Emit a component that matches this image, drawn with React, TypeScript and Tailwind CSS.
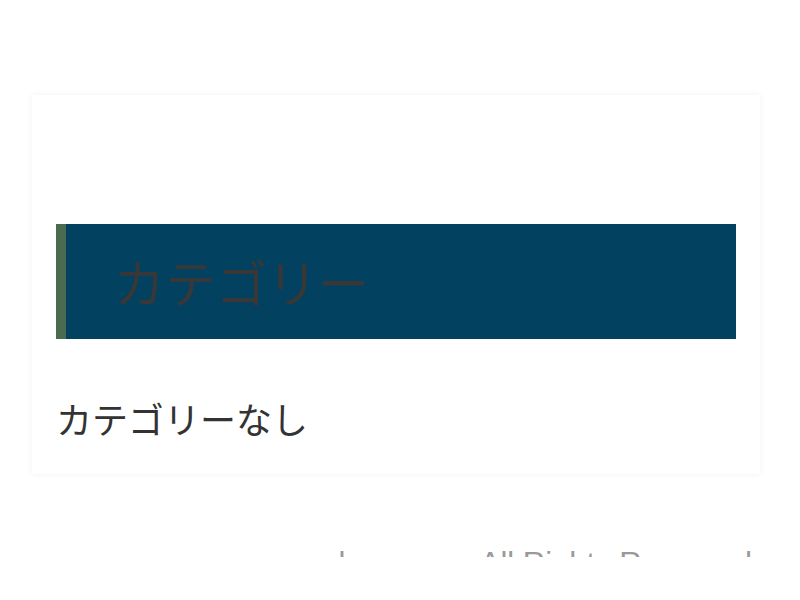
export default function App() {
  return (
    <div
      className="min-h-screen bg-white"
      style={{ fontFamily: '"Noto Sans CJK JP", "Noto Sans", sans-serif' }}
    >
      <main className="pt-[95px] px-[32px]">
        <section className="w-[728px] bg-white shadow-[0_0_6px_rgba(0,0,0,0.06)] px-6 pt-[129px] pb-[34px]">
          <h2 className="h-[115px] flex items-center border-l-[10px] border-[#4a6b50] bg-[#02415f] pl-[48px] text-[51px] font-normal text-[#383838]">
            カテゴリー
          </h2>
          <p className="mt-[57px] text-[36px] leading-[44px] text-[#333333]">カテゴリーなし</p>
        </section>
      </main>
      <footer className="mt-[70px] h-[13px] overflow-hidden">
        <p
          className="text-right pr-[48px] text-[31px] leading-[40px] text-[#999999] whitespace-nowrap"
          style={{ fontFamily: '"Liberation Sans", Arial, sans-serif' }}
        >
          lemonsea All Rights Reserved
        </p>
      </footer>
    </div>
  );
}
